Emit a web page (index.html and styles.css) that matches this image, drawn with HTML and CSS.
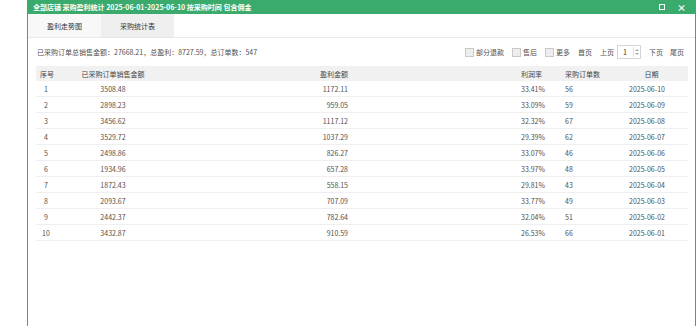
FILE: index.html
```html
<!DOCTYPE html>
<html lang="zh">
<head>
<meta charset="utf-8">
<link rel="stylesheet" href="styles.css">
</head>
<body>
<div class="dialog">
  <div class="titlebar">
    <span class="title">全部店铺 采购盈利统计 2025-06-01-2025-06-10 按采购时间 包含佣金</span>
    <span class="tb-icons">
      <span class="ic-max"></span>
      <span class="ic-close">×</span>
    </span>
  </div>
  <div class="tabs">
    <div class="tab tab-a">盈利走势图</div>
    <div class="tab tab-b">采购统计表</div>
  </div>
  <div class="content">
    <div class="summary">
      <span class="sum-text">已采购订单总销售金额：27668.21，总盈利：8727.59，总订单数：547</span>
      <div class="controls">
        <span class="chk"></span><span class="lbl">部分退款</span>
        <span class="chk"></span><span class="lbl">售后</span>
        <span class="chk"></span><span class="lbl">更多</span>
        <span class="pg">首页</span>
        <span class="pg pg-prev">上页</span>
        <span class="page-input"><span class="pnum">1</span><span class="spin"><span class="up"></span><span class="dn"></span></span></span>
        <span class="pg pg-next">下页</span>
        <span class="pg pg-last">尾页</span>
      </div>
    </div>
    <table class="grid">
      <colgroup>
        <col class="w1"><col class="w2"><col class="w3"><col class="w4"><col class="w5"><col class="w6">
      </colgroup>
      <thead>
        <tr><th class="c1">序号</th><th class="c2">已采购订单销售金额</th><th class="c3">盈利金额</th><th class="c4">利润率</th><th class="c5">采购订单数</th><th class="c6">日期</th></tr>
      </thead>
      <tbody>
        <tr><td class="c1">1</td><td class="c2">3508.48</td><td class="c3">1172.11</td><td class="c4">33.41%</td><td class="c5">56</td><td class="c6">2025-06-10</td></tr>
        <tr><td class="c1">2</td><td class="c2">2898.23</td><td class="c3">959.05</td><td class="c4">33.09%</td><td class="c5">59</td><td class="c6">2025-06-09</td></tr>
        <tr><td class="c1">3</td><td class="c2">3456.62</td><td class="c3">1117.12</td><td class="c4">32.32%</td><td class="c5">67</td><td class="c6">2025-06-08</td></tr>
        <tr><td class="c1">4</td><td class="c2">3529.72</td><td class="c3">1037.29</td><td class="c4">29.39%</td><td class="c5">62</td><td class="c6">2025-06-07</td></tr>
        <tr><td class="c1">5</td><td class="c2">2498.86</td><td class="c3">826.27</td><td class="c4">33.07%</td><td class="c5">46</td><td class="c6">2025-06-06</td></tr>
        <tr><td class="c1">6</td><td class="c2">1934.96</td><td class="c3">657.28</td><td class="c4">33.97%</td><td class="c5">48</td><td class="c6">2025-06-05</td></tr>
        <tr><td class="c1">7</td><td class="c2">1872.43</td><td class="c3">558.15</td><td class="c4">29.81%</td><td class="c5">43</td><td class="c6">2025-06-04</td></tr>
        <tr><td class="c1">8</td><td class="c2">2093.67</td><td class="c3">707.09</td><td class="c4">33.77%</td><td class="c5">49</td><td class="c6">2025-06-03</td></tr>
        <tr><td class="c1">9</td><td class="c2">2442.37</td><td class="c3">782.64</td><td class="c4">32.04%</td><td class="c5">51</td><td class="c6">2025-06-02</td></tr>
        <tr><td class="c1">10</td><td class="c2">3432.87</td><td class="c3">910.59</td><td class="c4">26.53%</td><td class="c5">66</td><td class="c6">2025-06-01</td></tr>
      </tbody>
    </table>
  </div>
</div>
</body>
</html>
```

FILE: styles.css
```css
html, body {
  margin: 0;
  padding: 0;
  background: #ffffff;
}
body {
  font-family: "Noto Sans CJK SC", "Noto Sans", sans-serif;
  font-size: 7px;
  color: #505050;
}
.dialog {
  margin-left: 27px;
  width: 669px;
  height: 326px;
  box-sizing: border-box;
  border-left: 1px solid #3aab6c;
  border-right: 1px solid #3aab6c;
  background: #fff;
}
.titlebar {
  height: 14px;
  margin: 0 -1px;
  background: #3aab6c;
  color: #fff;
  display: flex;
  align-items: center;
  justify-content: space-between;
  padding: 0 10px 0 6px;
  font-size: 7px;
  font-weight: bold;
  line-height: 14px;
}
.tb-icons {
  display: flex;
  align-items: center;
  gap: 12px;
}
.ic-max {
  width: 4px;
  height: 4px;
  border: 1.2px solid #fff;
  box-sizing: content-box;
}
.ic-close {
  font-size: 9px;
  font-weight: bold;
  line-height: 9px;
}
.tabs {
  display: flex;
  height: 23px;
  border-bottom: 1px solid #e9e9e9;
}
.tab {
  width: 73px;
  display: flex;
  align-items: center;
  justify-content: center;
  color: #333;
}
.tab-a {
  background: #f8f8f8;
}
.tab-b {
  background: #efefef;
}
.content {
  padding: 0 7px 0 8px;
}
.summary {
  height: 28px;
  display: flex;
  align-items: center;
  justify-content: space-between;
  padding-left: 1px;
  padding-right: 4px;
}
.controls {
  display: flex;
  align-items: center;
}
.chk {
  width: 7px;
  height: 7px;
  border: 1px solid #c9c9c9;
  background: #eeeeee;
  margin-right: 2px;
}
.lbl {
  margin-right: 8px;
}
.pg {
  margin-right: 8px;
}
.pg-prev {
  margin-right: 3px;
}
.pg-next {
  margin-right: 7px;
}
.pg-last {
  margin-right: 0;
}
.page-input {
  width: 24px;
  height: 14px;
  border: 1px solid #d5d5d5;
  box-sizing: border-box;
  display: flex;
  align-items: center;
  justify-content: space-between;
  padding: 0 1px 0 5px;
  margin-right: 8px;
}
.pnum {
  color: #333;
}
.spin {
  display: flex;
  flex-direction: column;
  gap: 2px;
  border-left: 1px solid #e2e2e2;
  padding-left: 1px;
  height: 10px;
  justify-content: center;
}
.up {
  width: 0;
  height: 0;
  border-left: 2px solid transparent;
  border-right: 2px solid transparent;
  border-bottom: 2px solid #aaa;
}
.dn {
  width: 0;
  height: 0;
  border-left: 2px solid transparent;
  border-right: 2px solid transparent;
  border-top: 2px solid #aaa;
}
.grid {
  width: 652px;
  border-collapse: collapse;
  table-layout: fixed;
}
.w1 { width: 20px; }
.w2 { width: 114px; }
.w3 { width: 182px; }
.w4 { width: 209px; }
.w5 { width: 64px; }
.w6 { width: 63px; }
.grid th {
  background: #f1f1f1;
  height: 15px;
  font-weight: normal;
  color: #444;
  padding: 0;
}
.grid td {
  height: 15px;
  border-bottom: 1px solid #efefef;
  padding: 0;
}
.c1 { text-align: center; }
.c2 { text-align: center; }
.c3 { text-align: right; padding-right: 4px !important; }
.c4 { text-align: left; padding-left: 169px !important; }
.c5 { text-align: left; padding-left: 4px !important; }
.c6 { text-align: center; padding-right: 19px !important; }
th.c1 { text-align: left; padding-left: 4px !important; }
th.c6 { padding-right: 10px !important; }
```
